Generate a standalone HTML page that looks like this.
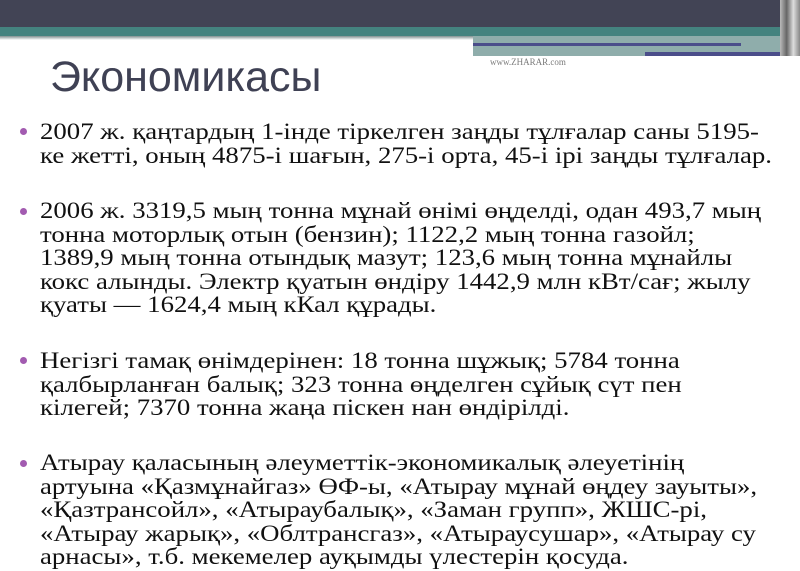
<!DOCTYPE html>
<html><head><meta charset="utf-8"><style>
body{margin:0;width:800px;height:571px;overflow:hidden;background:#fff;position:relative;font-family:"Liberation Serif",serif;}
.b{position:absolute}
.t{position:absolute;left:50px;top:53px;font-family:"Liberation Sans",sans-serif;font-size:43px;color:#3f4154;}
.p{position:absolute;left:40px;font-size:23px;line-height:23.5px;color:#111;white-space:nowrap;transform:scaleX(1.165);transform-origin:0 0;}
.d{position:absolute;left:20px;width:7px;height:7px;border-radius:50%;background:#a25bb0;}
.w{position:absolute;left:490px;top:57px;font-size:9px;color:#7a7a7a;}
</style></head><body>
<div class="b" style="left:0;top:0;width:800px;height:27px;background:#424455"></div>
<div class="b" style="left:0;top:27px;width:800px;height:9px;background:#44837f"></div>
<div class="b" style="left:0;top:36px;width:473px;height:4px;background:linear-gradient(#7f8f8f,#fff)"></div>
<div class="b" style="left:473px;top:36px;width:327px;height:20px;background:#8fadab"></div>
<div class="b" style="left:473px;top:43px;width:268px;height:3px;background:#4b4e8a"></div>
<div class="b" style="left:645px;top:52px;width:140px;height:4px;background:#4b4e8a"></div>
<div class="b" style="left:780px;top:0;width:20px;height:56px;background:linear-gradient(90deg,#bbb,#666,#ddd,#888)"></div>
<div class="w">www.ZHARAR.com</div>
<div class="t">Экономикасы</div>
<div class="d" style="top:128px"></div>
<div class="p" style="top:120px">2007 ж. қаңтардың 1-інде тіркелген заңды тұлғалар саны 5195-<br>ке жетті, оның 4875-і шағын, 275-і орта, 45-і ірі заңды тұлғалар.</div>
<div class="d" style="top:208px"></div>
<div class="p" style="top:199px">2006 ж. 3319,5 мың тонна мұнай өнімі өңделді, одан 493,7 мың<br>тонна моторлық отын (бензин); 1122,2 мың тонна газойл;<br>1389,9 мың тонна отындық мазут; 123,6 мың тонна мұнайлы<br>кокс алынды. Электр қуатын өндіру 1442,9 млн кВт/сағ; жылу<br>қуаты — 1624,4 мың кКал құрады.</div>
<div class="d" style="top:357px"></div>
<div class="p" style="top:349px">Негізгі тамақ өнімдерінен: 18 тонна шұжық; 5784 тонна<br>қалбырланған балық; 323 тонна өңделген сұйық сүт пен<br>кілегей; 7370 тонна жаңа піскен нан өндірілді.</div>
<div class="d" style="top:460px"></div>
<div class="p" style="top:451px">Атырау қаласының әлеуметтік-экономикалық әлеуетінің<br>артуына «Қазмұнайгаз» ӨФ-ы, «Атырау мұнай өңдеу зауыты»,<br>«Қазтрансойл», «Атыраубалық», «Заман групп», ЖШС-рі,<br>«Атырау жарық», «Облтрансгаз», «Атыраусушар», «Атырау су<br>арнасы», т.б. мекемелер ауқымды үлестерін қосуда.</div>
</body></html>
